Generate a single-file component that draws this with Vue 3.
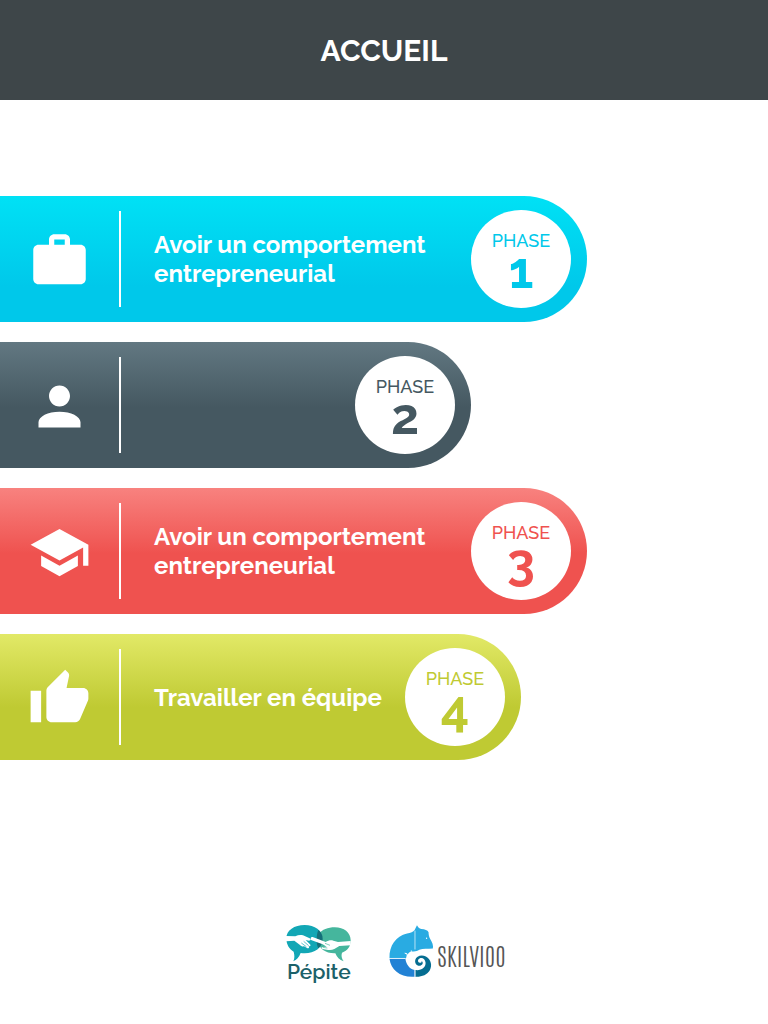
<script setup>
const phases = [
  {
    number: 1,
    theme: 'cyan',
    title: 'Avoir un comportement entrepreneurial',
    icon: 'M20 6h-4V4c0-1.11-.89-2-2-2h-4c-1.11 0-2 .89-2 2v2H4c-1.11 0-1.99.89-1.99 2L2 19c0 1.11.89 2 2 2h16c1.11 0 2-.89 2-2V8c0-1.11-.89-2-2-2zm-6 0h-4V4h4v2z',
  },
  {
    number: 2,
    theme: 'slate',
    title: '',
    icon: 'M12 12c2.21 0 4-1.79 4-4s-1.79-4-4-4-4 1.79-4 4 1.79 4 4 4zm0 2c-4.4 0-8 1.8-8 4v2h16v-2c0-2.2-3.6-4-8-4z',
  },
  {
    number: 3,
    theme: 'red',
    title: 'Avoir un comportement entrepreneurial',
    icon: 'M5 13.18v4L12 21l7-3.82v-4L12 17l-7-3.82zM12 3L1 9l11 6 9-4.91V17h2V9L12 3z',
  },
  {
    number: 4,
    theme: 'lime',
    title: 'Travailler en équipe',
    icon: 'M1 21h4V9H1v12zm22-11c0-1.1-.9-2-2-2h-6.31l.95-4.57.03-.32c0-.41-.17-.79-.44-1.06L14.17 1 7.59 7.59C7.22 7.95 7 8.45 7 9v10c0 1.1.9 2 2 2h9c.83 0 1.54-.5 1.84-1.22l3.02-7.05c.09-.23.14-.47.14-.73v-2z',
  },
]
</script>

<template>
  <div class="page">
    <header class="topbar">
      <h1>ACCUEIL</h1>
    </header>

    <main class="phases">
      <a v-for="p in phases" :key="p.number" href="#" class="phase" :class="p.theme">
        <svg class="icon" viewBox="0 0 24 24" aria-hidden="true"><path :d="p.icon" /></svg>
        <span class="divider"></span>
        <span class="title">{{ p.title }}</span>
        <span class="badge">
          <span class="label">PHASE</span>
          <span class="number">{{ p.number }}</span>
        </span>
      </a>
    </main>

    <footer class="partners">
      <div class="pepite">
        <svg viewBox="20 24 195 111" aria-hidden="true">
          <path fill="#12a7b5" d="M21 64C21 40 45 24 76 24c30 0 54 16 54 42S106 109 76 109c-4 0-8 0-12-1-5 13-12 20-22 25 4-9 4-18 1-29C29 97 21 81 21 64z" />
          <path fill="#45b69d" d="M119 50c9-12 27-19 47-19 28 0 48 16 48 39 0 19-9 31-26 37-3 9-1 17 5 26-13-4-20-12-25-24-29 1-49-14-53-36z" />
          <path fill="#146f79" d="M117 39c9 7 13 16 13 27 0 12-5 21-13 28-7-13-7-37 0-55z" />
          <path fill="#fff" d="M20 57l28 1c8-4 15-5 23-3l20 9c5 3 4 7-2 7l-10-2 13 13c4 4 0 7-4 5l1 3c1 3-3 5-6 3l-9-5c-5 1-9-1-13-5L45 71l-25 2z" />
          <path fill="none" stroke="#12a7b5" stroke-width="2" d="M73 73l15 13m-22-8 15 11" />
          <path fill="#fff" d="M100 60l39 15c8-5 15-6 23-4l14 4 38-3v13l-34 2-15 9c-8 4-16 3-23 2l-12-2c-5-2-4-6 0-6l12-1-12-7-33-12c-5-3-3-12 3-10z" />
          <path fill="none" stroke="#45b69d" stroke-width="2" d="M137 79l15 6m-22 6 14 2" />
        </svg>
        <span>Pépite</span>
      </div>
      <div class="skilvioo">
        <svg viewBox="26 26 138 160" aria-hidden="true">
          <path fill="#29abe2" d="M27 126C26 89 46 60 80 52c11-2 19-6 23-11l7-14c3 6 7 10 13 11 11 1 19 3 22 10 0 6 1 13 5 20 6 10 10 19 8 29-16 2-29-1-41 4-6 4-13 6-20 5-10-1-17 8-20 20z" />
          <path fill="#2282d5" d="M27 128h48c3 19 13 31 28 34v20c-43 3-71-19-76-54z" />
          <path fill="#056d91" d="M105 182v-20c17 3 32-8 31-22-1-11-10-17-18-13-7 3-6 12 1 13 4 1 6-2 5-5 6 4 4 12-4 14-10 2-18-7-15-18 3-12 19-17 32-10 16 9 20 28 11 43-8 12-23 19-43 18z" />
          <path fill="none" stroke="#fff" stroke-width="2" d="M104 43v57M26 127h48m30 35v20" />
          <circle cx="139" cy="66" r="2" fill="#fff" />
          <path fill="none" stroke="#fff" stroke-width="3" d="M73 111l7 2 1 9m12-19-1 8 9 3" />
        </svg>
        <span>SKILVIOO</span>
      </div>
    </footer>
  </div>
</template>

<style>
body {
  margin: 0;
  background: #fff;
}
</style>

<style scoped>
.page {
  min-height: 100vh;
  box-sizing: border-box;
  display: flex;
  flex-direction: column;
  font-family: Raleway, Lato, "Open Sans", sans-serif;
}
.topbar {
  height: 100px;
  display: flex;
  align-items: center;
  justify-content: center;
  background: #3e4649;
}
h1 {
  margin: 0;
  padding-top: 2px;
  font-size: 30px;
  line-height: 36px;
  font-weight: 700;
  color: #fff;
}
.phases {
  display: flex;
  flex-direction: column;
  gap: 20px;
  padding: 96px 0 40px;
}
.phase {
  box-sizing: border-box;
  min-height: 126px;
  width: 587px;
  max-width: 100%;
  padding: 0 16px 0 28px;
  display: flex;
  align-items: center;
  border-radius: 0 63px 63px 0;
  color: #fff;
  text-decoration: none;
}
.cyan {
  background: linear-gradient(#00e1f5, #00c8ea 72%);
  --accent: #00c8ea;
}
.slate {
  width: 471px;
  background: linear-gradient(#627882, #455861 52%);
  --accent: #455861;
}
.red {
  background: linear-gradient(#f8827f, #ef524f 52%);
  --accent: #ef524f;
}
.lime {
  width: 521px;
  background: linear-gradient(#e2e967, #bfca33 58%);
  --accent: #bfca33;
}
.icon {
  flex: none;
  width: 63px;
  height: 63px;
  margin-top: 2px;
  fill: currentColor;
}
.divider {
  flex: none;
  width: 2px;
  height: 96px;
  margin: 0 33px 0 28px;
  background: #fff;
}
.title {
  flex: 1;
  font-size: 24px;
  line-height: 29px;
  font-weight: 700;
}
.badge {
  flex: none;
  box-sizing: border-box;
  width: 100px;
  height: 98px;
  padding-top: 20px;
  display: flex;
  flex-direction: column;
  align-items: center;
  border-radius: 50%;
  background: #fff;
  color: var(--accent);
}
.label {
  font-size: 18px;
  line-height: 22px;
  font-weight: 500;
}
.number {
  font-size: 50px;
  line-height: 37px;
  font-weight: 700;
}
.partners {
  margin-top: auto;
  padding: 0 0 42px 24px;
  display: flex;
  align-items: flex-start;
  justify-content: center;
  gap: 38px;
}
.pepite {
  display: flex;
  flex-direction: column;
  align-items: center;
  font-size: 21px;
  line-height: 20px;
  font-weight: 600;
  color: #1b6169;
}
.pepite svg {
  width: 65px;
  height: 37px;
}
.skilvioo {
  display: flex;
  align-items: center;
  gap: 2px;
  font-family: Antonio, "Big Shoulders Display", "Pathway Gothic One", "Open Sans Condensed", "Liberation Sans Narrow", sans-serif;
  font-size: 24px;
  font-weight: 100;
  color: #555;
}
.skilvioo svg {
  width: 46px;
  height: 53px;
}
.skilvioo span {
  padding-top: 7px;
  line-height: 32px;
}
</style>
